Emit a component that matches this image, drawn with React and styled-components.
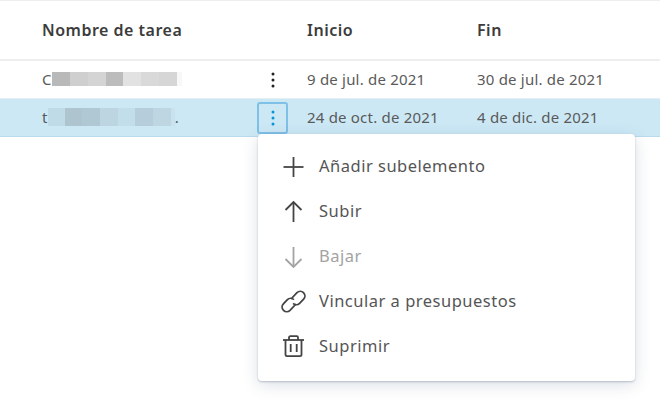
import React from "react";
import styled, { createGlobalStyle } from "styled-components";

const GlobalStyle = createGlobalStyle`
  html, body {
    margin: 0;
    padding: 0;
    background: #fff;
  }
  body {
    font-family: "Noto Sans", "Open Sans", sans-serif;
    color: #555;
  }
`;

const Page = styled.div`
  position: relative;
  width: 660px;
  height: 408px;
  overflow: hidden;
  background: #fff;
  border-top: 1px solid #eeeeee;
  box-sizing: border-box;
`;

const Row = styled.div`
  display: grid;
  grid-template-columns: 215px 50px 170px 1fr;
  align-items: center;
  padding-left: 42px;
  height: ${(p) => p.$height}px;
  background: ${(p) => (p.$selected ? "#cce8f5" : "transparent")};
  border-bottom: ${(p) => p.$line};
  box-sizing: border-box;
`;

const HeadCell = styled.div`
  font-size: 16px;
  font-weight: 600;
  letter-spacing: 0.5px;
  color: #3c3c3c;
`;

const Cell = styled.div`
  font-size: 15px;
  letter-spacing: 0.2px;
  padding-bottom: 2px;
  color: #5a5a5a;
  white-space: nowrap;
`;

const NameCell = styled(Cell)`
  display: flex;
  align-items: center;
`;

const Mosaic = styled.div`
  display: flex;
  height: ${(p) => p.$height}px;
`;

const Tile = styled.span`
  display: block;
  width: ${(p) => p.$w}px;
  background: ${(p) => p.$c};
`;

const KebabButton = styled.button`
  display: flex;
  align-items: center;
  justify-content: center;
  width: 31px;
  height: 32px;
  padding: 0;
  background: transparent;
  border: ${(p) => (p.$active ? "2px solid #7fc0e6" : "2px solid transparent")};
  border-radius: 3px;
  color: ${(p) => (p.$active ? "#0696d7" : "#222")};
  box-sizing: border-box;
`;

const Menu = styled.div`
  position: absolute;
  left: 258px;
  top: 133px;
  width: 377px;
  height: 247px;
  display: flex;
  flex-direction: column;
  padding-top: 9px;
  box-sizing: border-box;
  background: #fff;
  border-radius: 4px;
  box-shadow: 0 1px 2px rgba(60, 80, 110, 0.3), 0 4px 16px rgba(60, 80, 110, 0.18);
`;

const MenuItem = styled.div`
  display: flex;
  align-items: center;
  height: 45px;
  padding-left: 23px;
  gap: 13px;
  font-size: 16.5px;
  letter-spacing: 0.5px;
  color: ${(p) => (p.$disabled ? "#a3a3a3" : "#555")};
`;

const IconBox = styled.svg`
  width: 25px;
  height: 25px;
  flex: none;
  fill: none;
  stroke: ${(p) => (p.$disabled ? "#a3a3a3" : "#444")};
  stroke-width: 1.8;
`;

const Kebab = () => (
  <svg width="4" height="16" viewBox="0 0 4 16" fill="currentColor">
    <circle cx="2" cy="2" r="1.5" />
    <circle cx="2" cy="8" r="1.5" />
    <circle cx="2" cy="14" r="1.5" />
  </svg>
);

const grey = [
  [18, "#b9b9b9"],
  [18, "#cfcfcf"],
  [18, "#d4d4d4"],
  [17, "#bcbcbc"],
  [18, "#e2e2e2"],
  [18, "#d9d9d9"],
  [18, "#d6d6d6"],
  [5, "#f8f8f8"],
];

const blue = [
  [17, "#c0dbe8"],
  [17, "#aec5d0"],
  [18, "#b0c8d3"],
  [18, "#bcd5e1"],
  [17, "#c3deeb"],
  [18, "#b6cedb"],
  [18, "#bdd6e2"],
  [4, "#c8e3ef"],
];

const items = [
  { label: "Añadir subelemento", d: ["M12.5 4v20", "M2.5 14h20"] },
  { label: "Subir", d: ["M12.5 24V4", "M4.5 12l8-8 8 8"] },
  { label: "Bajar", d: ["M12.5 4v20", "M4.5 16l8 8 8-8"], disabled: true },
  {
    label: "Vincular a presupuestos",
    d: [
      "M10 11l6-6.3a4.6 4.6 0 0 1 6.5 0l.1.1a4.6 4.6 0 0 1 0 6.4l-4 4.1a4.6 4.6 0 0 1-6.5 0",
      "M15 16l-6 6.3a4.6 4.6 0 0 1-6.5 0l-.1-.1a4.6 4.6 0 0 1 0-6.4l4-4.1a4.6 4.6 0 0 1 6.5 0",
    ],
  },
  {
    label: "Suprimir",
    d: [
      "M2 7h21",
      "M8 7V4.5c0-.8.5-1.3 1.3-1.3h6.4c.8 0 1.3.5 1.3 1.3V7",
      "M4.5 7v14.5c0 1 .6 1.6 1.6 1.6h12.8c1 0 1.6-.6 1.6-1.6V7",
      "M9.7 11v8",
      "M15.7 11v8",
    ],
  },
];

export default function App() {
  return (
    <Page>
      <GlobalStyle />
      <Row $height={60} $line="2px solid #eeeeee">
        <HeadCell>Nombre de tarea</HeadCell>
        <span />
        <HeadCell>Inicio</HeadCell>
        <HeadCell>Fin</HeadCell>
      </Row>
      <Row $height={38} $line="1px solid #e4eef3">
        <NameCell>
          C
          <Mosaic $height={14}>
            {grey.map(([w, c], i) => (
              <Tile key={i} $w={w} $c={c} />
            ))}
          </Mosaic>
        </NameCell>
        <KebabButton>
          <Kebab />
        </KebabButton>
        <Cell>9 de jul. de 2021</Cell>
        <Cell>30 de jul. de 2021</Cell>
      </Row>
      <Row $height={38} $selected $line="1px solid #b8dcee">
        <NameCell>
          t
          <Mosaic $height={18}>
            {blue.map(([w, c], i) => (
              <Tile key={i} $w={w} $c={c} />
            ))}
          </Mosaic>
          .
        </NameCell>
        <KebabButton $active>
          <Kebab />
        </KebabButton>
        <Cell>24 de oct. de 2021</Cell>
        <Cell>4 de dic. de 2021</Cell>
      </Row>
      <Menu>
        {items.map((item) => (
          <MenuItem key={item.label} $disabled={item.disabled}>
            <IconBox viewBox="0 0 25 25" $disabled={item.disabled}>
              {item.d.map((d) => (
                <path key={d} d={d} />
              ))}
            </IconBox>
            {item.label}
          </MenuItem>
        ))}
      </Menu>
    </Page>
  );
}
